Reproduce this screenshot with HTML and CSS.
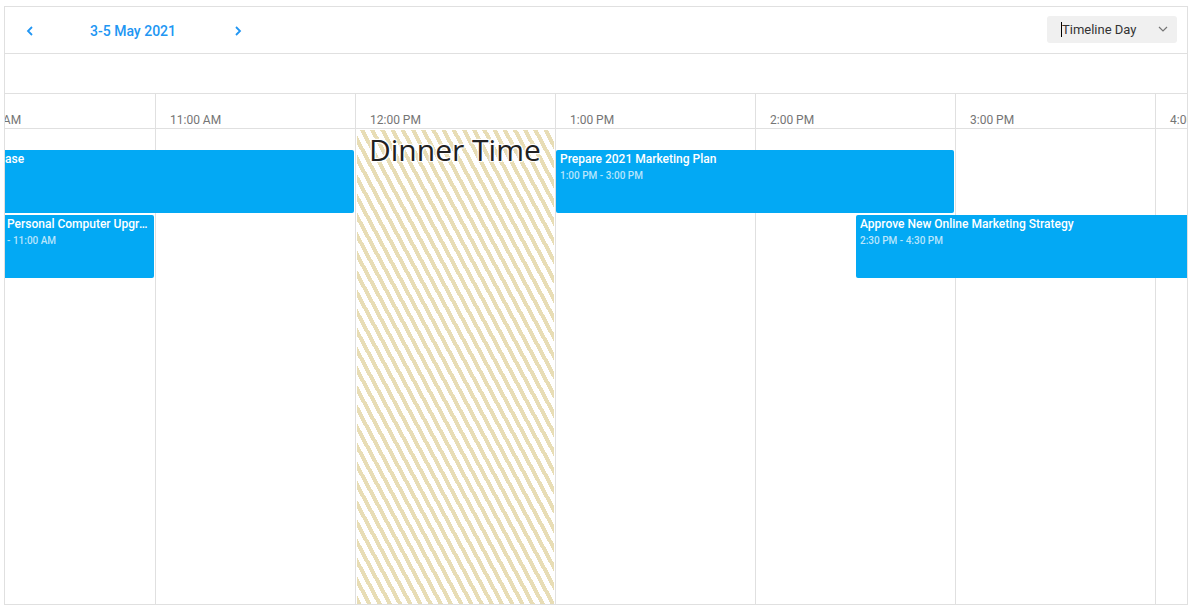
FILE: index.html
```html
<!DOCTYPE html>
<html lang="en">
<head>
<meta charset="utf-8">
<title>Timeline Scheduler</title>
<link rel="stylesheet" href="styles.css">
</head>
<body>
<div class="scheduler">
  <div class="toolbar">
    <button class="nav-btn prev" aria-label="Previous">
      <svg width="8" height="10" viewBox="0 0 8 10"><path d="M6 1 L2 5 L6 9" fill="none" stroke="#2196f3" stroke-width="1.8"/></svg>
    </button>
    <span class="date-range">3-5 May 2021</span>
    <button class="nav-btn next" aria-label="Next">
      <svg width="8" height="10" viewBox="0 0 8 10"><path d="M2 1 L6 5 L2 9" fill="none" stroke="#2196f3" stroke-width="1.8"/></svg>
    </button>
    <div class="view-select">
      <span class="caret"></span><span class="view-label">Timeline Day</span>
      <svg class="chev" width="10" height="6" viewBox="0 0 10 6"><path d="M1 1 L5 5 L9 1" fill="none" stroke="#757575" stroke-width="1.2"/></svg>
    </div>
  </div>
  <div class="allday-row"></div>
  <div class="timeline">
    <div class="track">
      <div class="header-row">
        <div class="hcell"><span>10:00 AM</span></div>
        <div class="hcell"><span>11:00 AM</span></div>
        <div class="hcell"><span>12:00 PM</span></div>
        <div class="hcell"><span>1:00 PM</span></div>
        <div class="hcell"><span>2:00 PM</span></div>
        <div class="hcell"><span>3:00 PM</span></div>
        <div class="hcell"><span>4:00 PM</span></div>
      </div>
      <div class="body-row">
        <div class="bcell"></div>
        <div class="bcell"></div>
        <div class="bcell"></div>
        <div class="bcell"></div>
        <div class="bcell"></div>
        <div class="bcell"></div>
        <div class="bcell"></div>

        <div class="blocked" style="left:401px;width:197px">
          <span class="blocked-title">Dinner Time</span>
        </div>

        <div class="event clipped" style="left:49px;top:21px;width:349px">
          <div class="ev-title">ase</div>
        </div>
        <div class="event clipped pad2" style="left:49px;top:86px;width:149px">
          <div class="ev-title">Personal Computer Upgrade</div>
          <div class="ev-time">- 11:00 AM</div>
        </div>
        <div class="event" style="left:600px;top:21px;width:398px">
          <div class="ev-title">Prepare 2021 Marketing Plan</div>
          <div class="ev-time">1:00 PM - 3:00 PM</div>
        </div>
        <div class="event" style="left:900px;top:86px;width:398px">
          <div class="ev-title">Approve New Online Marketing Strategy</div>
          <div class="ev-time">2:30 PM - 4:30 PM</div>
        </div>
      </div>
    </div>
  </div>
</div>
</body>
</html>
```

FILE: styles.css
```css
* { box-sizing: border-box; }

html, body {
  margin: 0;
  padding: 0;
  background: #fff;
  font-family: Roboto, "Liberation Sans", sans-serif;
}

.scheduler {
  margin: 6px 4px 0;
  height: 599px;
  border: 1px solid #e0e0e0;
  display: flex;
  flex-direction: column;
  overflow: hidden;
}

.toolbar {
  height: 47px;
  flex: none;
  border-bottom: 1px solid #e0e0e0;
  display: flex;
  align-items: center;
  padding-left: 21px;
  padding-top: 1px;
}

.nav-btn {
  border: 0;
  background: none;
  padding: 0;
  width: 8px;
  height: 10px;
  display: flex;
  align-items: center;
  justify-content: center;
  cursor: pointer;
}

.date-range {
  margin-left: 56px;
  color: #2196f3;
  font-size: 14px;
  font-weight: 500;
}

.nav-btn.next { margin-left: 58px; }

.view-select {
  margin-left: auto;
  margin-right: 10px;
  width: 130px;
  height: 27px;
  background: #f0f0f0;
  border-radius: 3px;
  display: flex;
  align-items: center;
  padding-left: 14px;
  padding-right: 9px;
  margin-top: -3px;
}

.caret {
  width: 1px;
  height: 15px;
  background: #000;
}

.view-label {
  font-size: 13px;
  color: #333;
}

.chev { margin-left: auto; }

.allday-row {
  height: 40px;
  flex: none;
  border-bottom: 1px solid #e0e0e0;
}

.timeline {
  flex: 1;
  overflow: hidden;
  position: relative;
}

.track {
  margin-left: -49px;
  width: 1400px;
  height: 100%;
  display: flex;
  flex-direction: column;
}

.header-row {
  height: 35px;
  flex: none;
  display: flex;
  border-bottom: 1px solid #e0e0e0;
}

.hcell {
  width: 200px;
  flex: none;
  border-right: 1px solid #e0e0e0;
  display: flex;
  align-items: flex-end;
  padding-left: 14px;
  padding-bottom: 1px;
  font-size: 12px;
  line-height: 14px;
  color: #757575;
}

.body-row {
  flex: 1;
  display: flex;
  position: relative;
}

.bcell {
  width: 200px;
  flex: none;
  border-right: 1px solid #e0e0e0;
}

.blocked {
  position: absolute;
  top: 1px;
  bottom: 0;
  background: repeating-linear-gradient(62deg, #e8ddb5 0 4px, #ffffff 4px 9px);
  padding-left: 12px;
  padding-top: 2px;
}

.blocked-title {
  font-family: "Open Sans", "Noto Sans", sans-serif;
  font-size: 30px;
  line-height: 36px;
  color: #212121;
  text-shadow: -1px -1px 0 #fff, 1px -1px 0 #fff, -1px 1px 0 #fff, 1px 1px 0 #fff, 0 0 3px #fff;
  white-space: nowrap;
}

.event {
  position: absolute;
  height: 63px;
  background: #03a9f4;
  border-radius: 2px;
  padding: 1px 6px 0 4px;
  color: #fff;
  overflow: hidden;
}

.event.clipped {
  padding-left: 0;
  border-radius: 0 2px 2px 0;
}

.event.pad2 { padding-left: 2px; }

.ev-title {
  font-size: 12px;
  font-weight: 500;
  line-height: 16px;
  white-space: nowrap;
  overflow: hidden;
  text-overflow: ellipsis;
}

.ev-time {
  margin-top: 2px;
  font-size: 10px;
  font-weight: 500;
  line-height: 14px;
  color: rgba(255, 255, 255, 0.72);
  white-space: nowrap;
}
```
